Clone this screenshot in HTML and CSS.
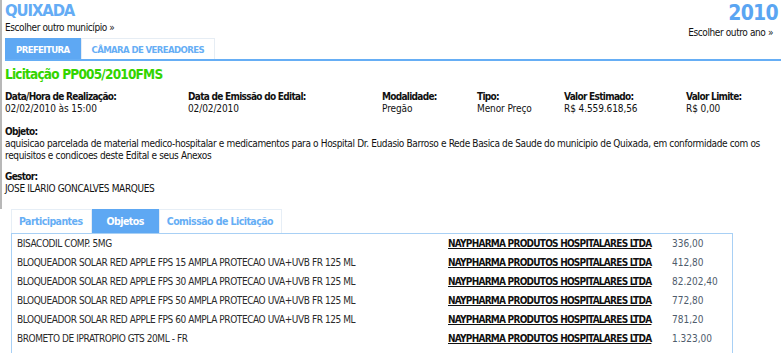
FILE: index.html
```html
<!DOCTYPE html>
<html lang="pt-BR">
<head>
<meta charset="utf-8">
<title>Licitação PP005/2010FMS</title>
<link rel="stylesheet" href="styles.css">
</head>
<body>
<div class="page">
  <div class="top">
    <header class="head">
      <div class="city">
        <h1 class="city-name">QUIXADA</h1>
        <a class="switch" href="#">Escolher outro município »</a>
      </div>
      <div class="year">
        <div class="year-num">2010</div>
        <a class="switch" href="#">Escolher outro ano »</a>
      </div>
    </header>
    <nav class="main-tabs">
      <a class="mtab active" href="#">PREFEITURA</a>
      <a class="mtab" href="#">CÂMARA DE VEREADORES</a>
    </nav>
    <h2 class="title">Licitação PP005/2010FMS</h2>
    <div class="fields">
      <div class="field"><div class="lbl">Data/Hora de Realização:</div><div class="val">02/02/2010 às 15:00</div></div>
      <div class="field"><div class="lbl">Data de Emissão do Edital:</div><div class="val">02/02/2010</div></div>
      <div class="field"><div class="lbl">Modalidade:</div><div class="val">Pregão</div></div>
      <div class="field"><div class="lbl">Tipo:</div><div class="val">Menor Preço</div></div>
      <div class="field"><div class="lbl">Valor Estimado:</div><div class="val">R$ 4.559.618,56</div></div>
      <div class="field"><div class="lbl">Valor Limite:</div><div class="val">R$ 0,00</div></div>
    </div>
    <div class="block">
      <div class="lbl">Objeto:</div>
      <div class="val text">aquisicao parcelada de material medico-hospitalar e medicamentos para o Hospital Dr. Eudasio Barroso e Rede Basica de Saude do municipio de Quixada, em conformidade com os requisitos e condicoes deste Edital e seus Anexos</div>
    </div>
    <div class="block second">
      <div class="lbl">Gestor:</div>
      <div class="val caps">JOSE ILARIO GONCALVES MARQUES</div>
    </div>
  </div>
  <div class="sub">
    <nav class="sub-tabs">
      <a class="stab" href="#">Participantes</a>
      <a class="stab active" href="#">Objetos</a>
      <a class="stab" href="#">Comissão de Licitação</a>
    </nav>
    <div class="panel">
      <table class="items">
        <tr><td class="item">BISACODIL COMP. 5MG</td><td class="sup"><a href="#">NAYPHARMA PRODUTOS HOSPITALARES LTDA</a></td><td class="price">336,00</td></tr>
        <tr><td class="item">BLOQUEADOR SOLAR RED APPLE FPS 15 AMPLA PROTECAO UVA+UVB FR 125 ML</td><td class="sup"><a href="#">NAYPHARMA PRODUTOS HOSPITALARES LTDA</a></td><td class="price">412,80</td></tr>
        <tr><td class="item">BLOQUEADOR SOLAR RED APPLE FPS 30 AMPLA PROTECAO UVA+UVB FR 125 ML</td><td class="sup"><a href="#">NAYPHARMA PRODUTOS HOSPITALARES LTDA</a></td><td class="price">82.202,40</td></tr>
        <tr><td class="item">BLOQUEADOR SOLAR RED APPLE FPS 50 AMPLA PROTECAO UVA+UVB FR 125 ML</td><td class="sup"><a href="#">NAYPHARMA PRODUTOS HOSPITALARES LTDA</a></td><td class="price">772,80</td></tr>
        <tr><td class="item">BLOQUEADOR SOLAR RED APPLE FPS 60 AMPLA PROTECAO UVA+UVB FR 125 ML</td><td class="sup"><a href="#">NAYPHARMA PRODUTOS HOSPITALARES LTDA</a></td><td class="price">781,20</td></tr>
        <tr><td class="item">BROMETO DE IPRATROPIO GTS 20ML - FR</td><td class="sup"><a href="#">NAYPHARMA PRODUTOS HOSPITALARES LTDA</a></td><td class="price">1.323,00</td></tr>
      </table>
    </div>
  </div>
</div>
</body>
</html>
```

FILE: styles.css
```css
* { box-sizing: border-box; }
html, body { margin: 0; padding: 0; background: #fff; }
body {
  font-family: "DejaVu Sans Condensed", "DejaVu Sans", sans-serif;
  font-size: 10px;
  color: #111;
  overflow: hidden;
}
a { text-decoration: none; color: inherit; }

.top {
  border-left: 2px solid #b8b8b8;
  padding-left: 3px;
  padding-bottom: 14px;
}

.head {
  display: flex;
  justify-content: space-between;
  align-items: flex-start;
  height: 38px;
}
.city-name {
  margin: 0;
  padding-top: 1px;
  font-size: 16.5px;
  line-height: 20px;
  font-weight: bold;
  letter-spacing: -1.1px;
  color: #64acf5;
}
.switch { display: block; font-size: 10px; line-height: 13px; color: #111; letter-spacing: -0.4px; }
.city .switch { margin-top: 0; }
.year { text-align: right; padding-right: 8px; }
.year-num {
  font-size: 21px;
  line-height: 22px;
  font-weight: bold;
  color: #5aa5f2;
  padding-top: 2px;
  margin-right: -5px;
  letter-spacing: -0.7px;
}
.year .switch { margin-top: 2px; }

.main-tabs {
  display: flex;
  border-bottom: 2px solid #66aef5;
  height: 23px;
}
.mtab {
  display: block;
  height: 21px;
  line-height: 21px;
  padding: 0 10px;
  font-weight: bold;
  font-size: 9.5px;
  letter-spacing: -0.6px;
  color: #66aef5;
  border: 1px solid #e6edf4;
  border-bottom: 0;
}
.mtab.active { background: #5ea8f3; color: #fff; border-color: #5ea8f3; }

.title {
  margin: 0;
  padding-top: 5px;
  font-size: 13.5px;
  line-height: 17px;
  font-weight: bold;
  letter-spacing: -0.8px;
  color: #33d400;
}

.fields {
  display: grid;
  grid-template-columns: 183px 194px 95px 87px 122px 1fr;
  margin-top: 8px;
}
.lbl { font-weight: bold; line-height: 12px; letter-spacing: -0.7px; }
.val { line-height: 12px; letter-spacing: -0.1px; }
.val.text { letter-spacing: -0.35px; padding-right: 10px; }
.val.caps { letter-spacing: -0.35px; }

.block { margin-top: 11px; }
.block.second { margin-top: 9px; }

.sub { padding-left: 11px; }
.sub-tabs { display: flex; height: 24px; }
.stab {
  display: block;
  height: 24px;
  line-height: 23px;
  padding: 0 8px 0 7px;
  font-weight: bold;
  font-size: 10.5px;
  letter-spacing: -0.55px;
  color: #66aef5;
  border: 1px solid #e6eef6;
  border-bottom: 0;
}
.stab.active { background: #5ea8f3; color: #fff; border-color: #5ea8f3; padding: 0 14px; }

.panel {
  width: 722px;
  border: 1px solid #a8d0f5;
  border-bottom: 0;
  padding: 0 0 0 5px;
  height: 130px;
}
.items { border-collapse: collapse; }
.items td { height: 19px; padding: 0; vertical-align: middle; white-space: nowrap; color: #2a2a2a; letter-spacing: -0.42px; }
.items .item { width: 431px; }
.items .sup { width: 224px; }
.items .sup a { font-weight: bold; text-decoration: underline; color: #111; letter-spacing: -0.75px; }
.items .price { color: #4e5c6c; letter-spacing: 0; }
```
